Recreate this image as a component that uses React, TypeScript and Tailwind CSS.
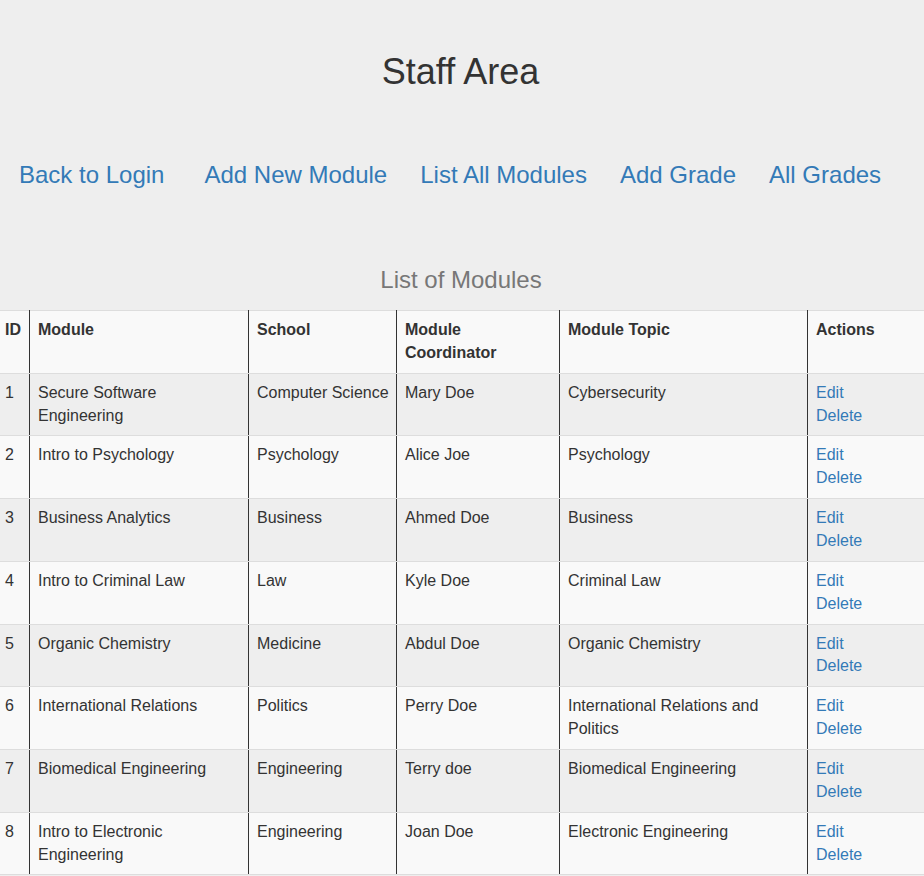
import React from 'react';

interface Module {
  id: number;
  name: string;
  school: string;
  coordinator: string;
  topic: string;
}

const modules: Module[] = [
  { id: 1, name: 'Secure Software Engineering', school: 'Computer Science', coordinator: 'Mary Doe', topic: 'Cybersecurity' },
  { id: 2, name: 'Intro to Psychology', school: 'Psychology', coordinator: 'Alice Joe', topic: 'Psychology' },
  { id: 3, name: 'Business Analytics', school: 'Business', coordinator: 'Ahmed Doe', topic: 'Business' },
  { id: 4, name: 'Intro to Criminal Law', school: 'Law', coordinator: 'Kyle Doe', topic: 'Criminal Law' },
  { id: 5, name: 'Organic Chemistry', school: 'Medicine', coordinator: 'Abdul Doe', topic: 'Organic Chemistry' },
  { id: 6, name: 'International Relations', school: 'Politics', coordinator: 'Perry Doe', topic: 'International Relations and Politics' },
  { id: 7, name: 'Biomedical Engineering', school: 'Engineering', coordinator: 'Terry doe', topic: 'Biomedical Engineering' },
  { id: 8, name: 'Intro to Electronic Engineering', school: 'Engineering', coordinator: 'Joan Doe', topic: 'Electronic Engineering' },
];

const navLinks = ['Add New Module', 'List All Modules', 'Add Grade', 'All Grades'];

const cell = 'border-x border-x-[#333] border-y border-y-[#ddd] px-2 pt-[8px] pb-[8px] align-top text-left';

const App: React.FC = () => {
  return (
    <div className="min-h-[876px] w-[924px] overflow-hidden bg-[#eeeeee] text-[#333] font-['Liberation_Sans',Arial,sans-serif]">
      <h1 className="mt-[52px] text-center text-[36px] leading-[40px] -ml-[3px]">Staff Area</h1>

      {/* Navegação */}
      <nav className="mt-[68px] flex pl-[19px] text-[24px] leading-[30px] text-[#337ab7]">
        <a href="#" className="mr-[40px]">Back to Login</a>
        <div className="flex gap-[33px]">
          {navLinks.map((link) => (
            <a key={link} href="#">{link}</a>
          ))}
        </div>
      </nav>

      <h3 className="mt-[75px] text-center text-[24px] leading-[30px] text-[#777] -ml-[2px]">List of Modules</h3>

      {/* Tabela */}
      <div className="mt-[15px]">
        <table className="-ml-[4px] w-[930px] table-fixed border-collapse text-[16px] leading-[22.86px]">
          <colgroup>
            <col className="w-[33px]" />
            <col className="w-[219px]" />
            <col className="w-[148px]" />
            <col className="w-[163px]" />
            <col className="w-[248px]" />
            <col className="w-[119px]" />
          </colgroup>
          <thead>
            <tr className="bg-[#f9f9f9] font-bold">
              <th className={cell}>ID</th>
              <th className={cell}>Module</th>
              <th className={cell}>School</th>
              <th className={cell}>Module Coordinator</th>
              <th className={cell}>Module Topic</th>
              <th className={cell}>Actions</th>
            </tr>
          </thead>
          <tbody>
            {modules.map((m, i) => (
              <tr key={m.id} className={i % 2 === 0 ? 'bg-[#eeeeee]' : 'bg-[#f9f9f9]'}>
                <td className={cell}>{m.id}</td>
                <td className={cell}>{m.name}</td>
                <td className={`${cell} whitespace-nowrap`}>{m.school}</td>
                <td className={cell}>{m.coordinator}</td>
                <td className={cell}>{m.topic}</td>
                <td className={cell}>
                  <a href="#" className="block text-[#337ab7]">Edit</a>
                  <a href="#" className="block text-[#337ab7]">Delete</a>
                </td>
              </tr>
            ))}
          </tbody>
        </table>
      </div>
    </div>
  );
};

export default App;
